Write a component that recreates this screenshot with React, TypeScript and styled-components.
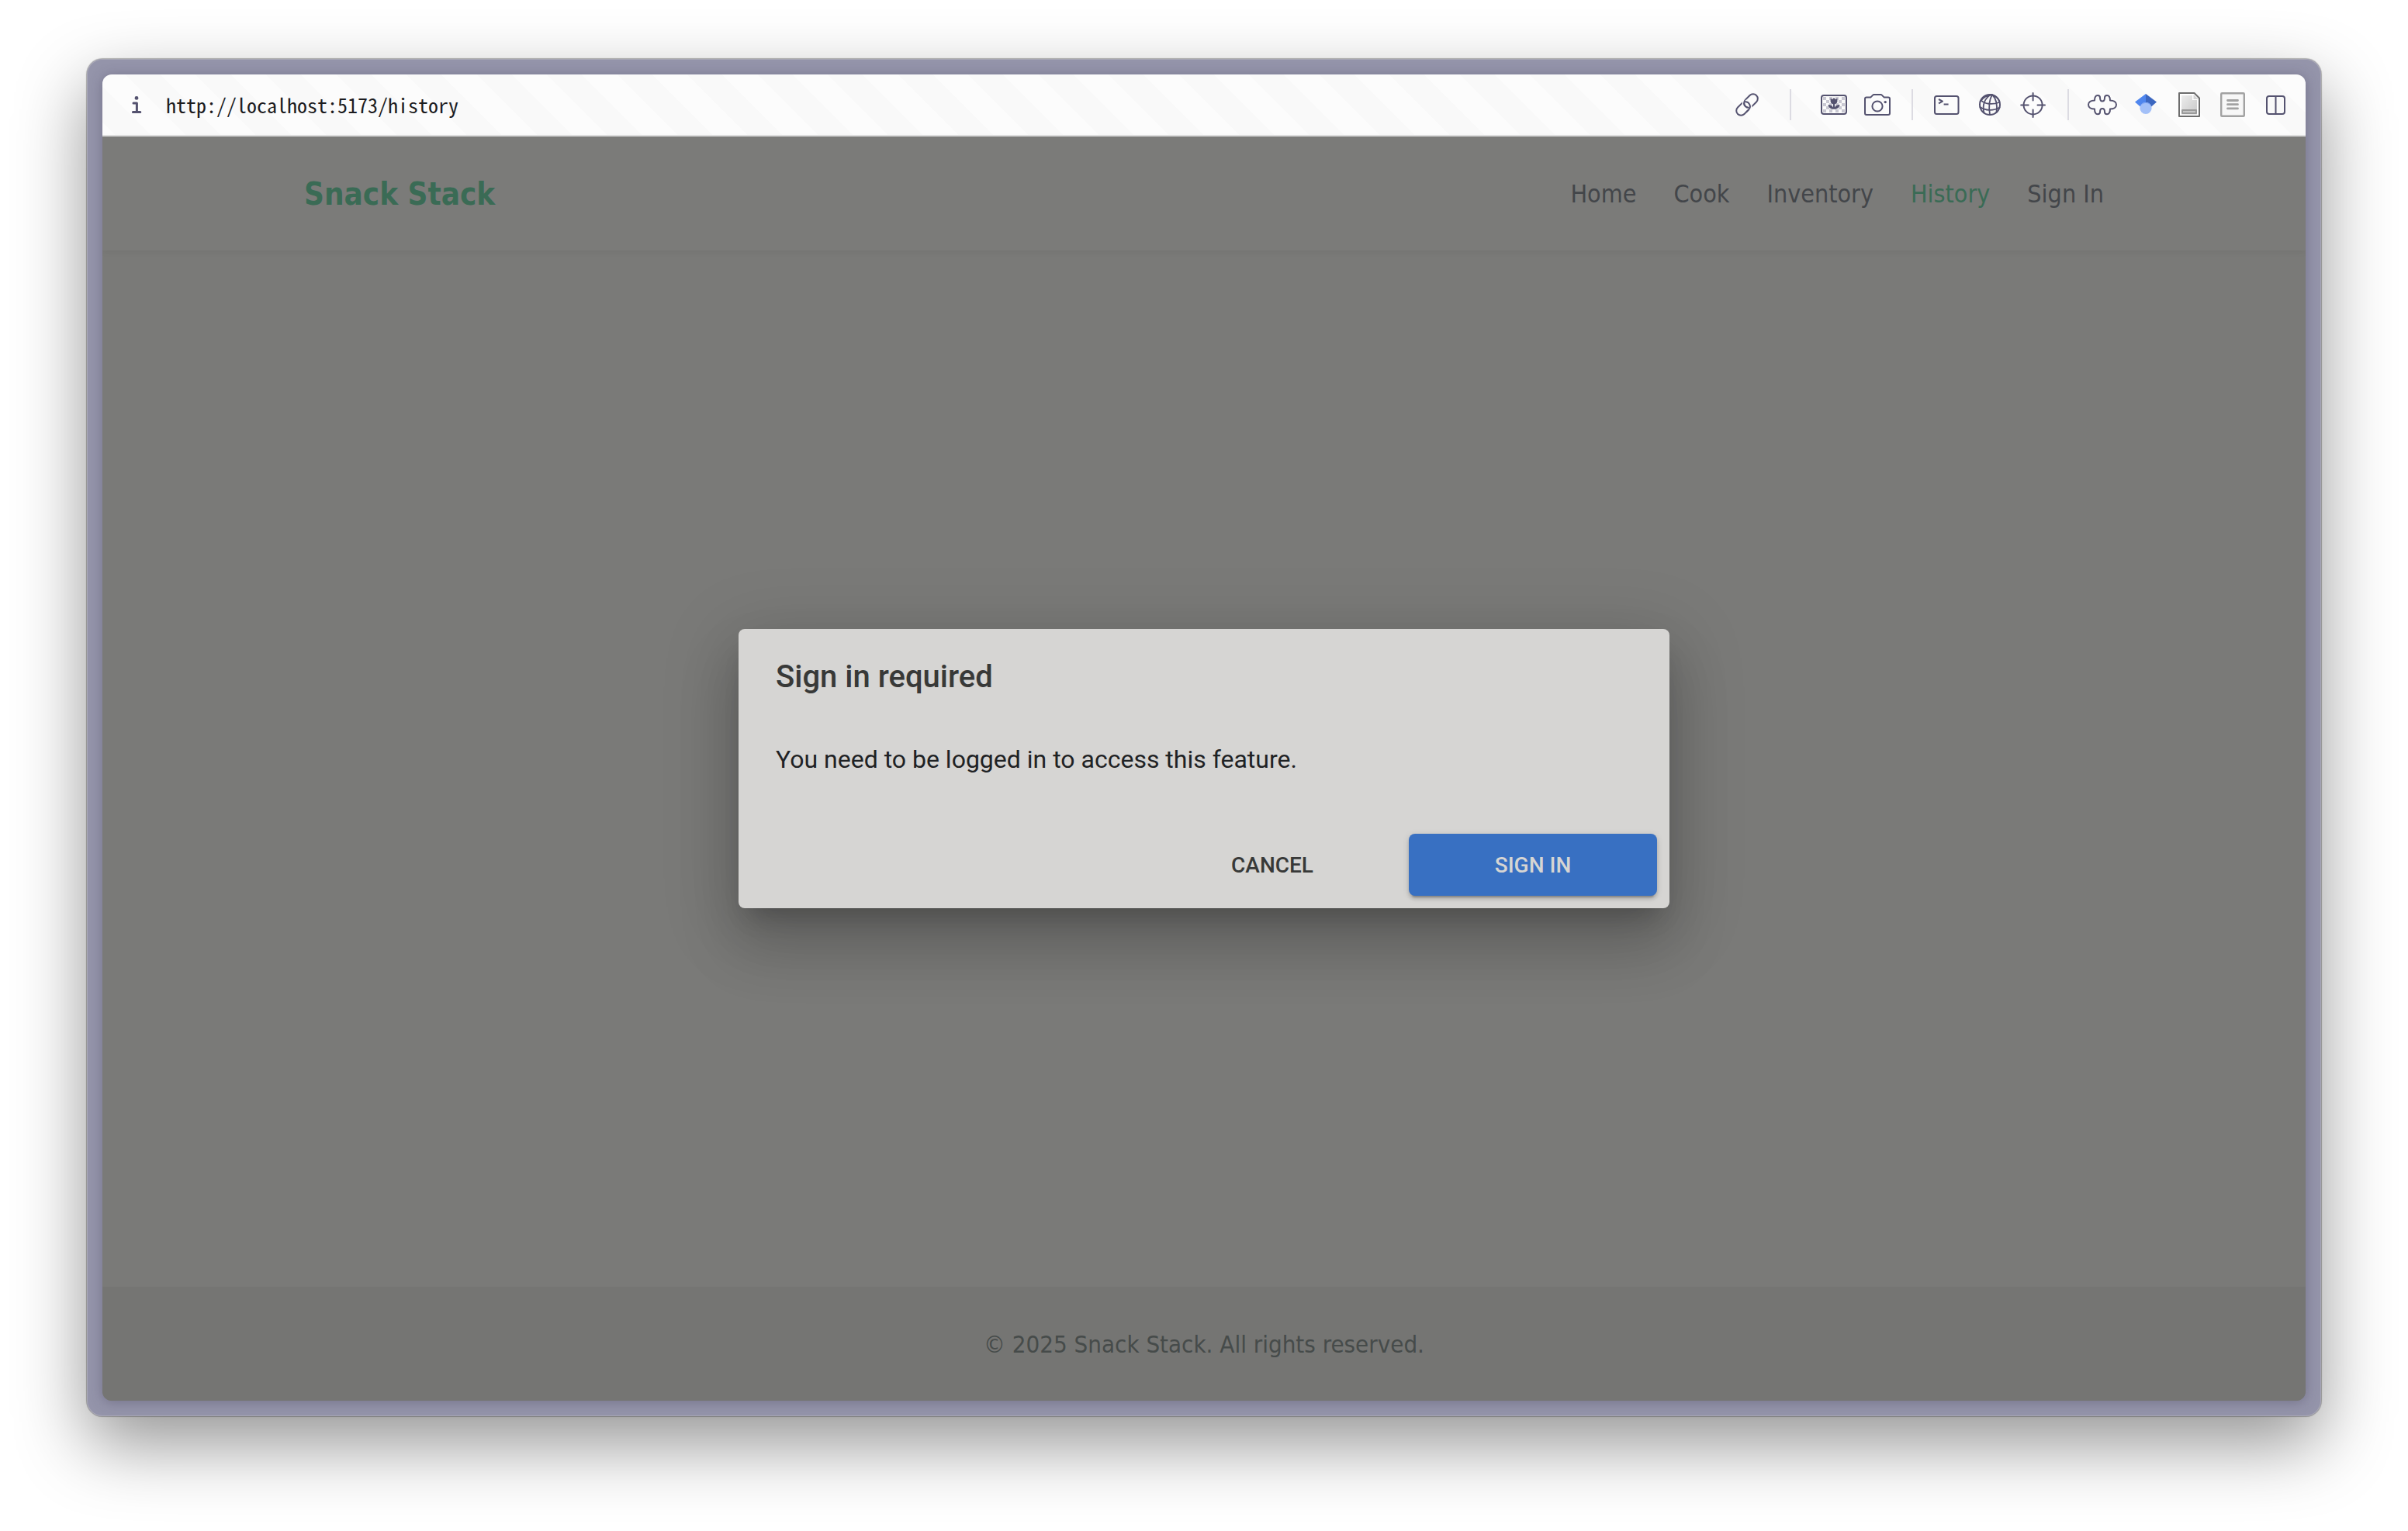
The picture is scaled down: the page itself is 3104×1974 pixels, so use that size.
import React from "react";
import styled, { createGlobalStyle } from "styled-components";

const ink = "#54526f";
const brandFont = `"DejaVu Sans Condensed", "DejaVu Sans", sans-serif`;

const GlobalStyle = createGlobalStyle`
  *, *::before, *::after { box-sizing: border-box; }
  body { margin: 0; background: #ffffff; }
`;

const Desktop = styled.div`
  min-height: 100vh;
  display: flex;
  padding: 76px 112px 148px;
  overflow: hidden;
`;

const WindowFrame = styled.div`
  flex: 1;
  display: flex;
  padding: 20px;
  border-radius: 20px;
  background: #9494aa;
  box-shadow:
    inset 0 0 0 1px #a9a8b6,
    0 0 1px 1px rgba(0, 0, 0, 0.28),
    0 36px 90px rgba(0, 0, 0, 0.42);
`;

const WindowBody = styled.div`
  flex: 1;
  display: flex;
  flex-direction: column;
  border-radius: 12px;
  overflow: hidden;
  box-shadow: 0 2px 16px rgba(60, 55, 80, 0.35);
`;

const AddressBar = styled.div`
  display: flex;
  align-items: center;
  height: 80px;
  padding: 0 10px 0 16px;
  border-bottom: 2px solid #e0e0e0;
  background: repeating-linear-gradient(
    45deg,
    #fcfcfc 0 12px,
    #f9f9f9 12px 44px,
    #fcfcfc 44px 64px
  );
`;

const UrlInput = styled.input`
  flex: 1;
  min-width: 0;
  height: 56px;
  padding: 0 10px 2px;
  border: 0;
  outline: 0;
  background: transparent;
  color: #1c1c1f;
  font: 26px "Noto Sans Mono CJK SC", "Liberation Mono", monospace;
`;

const IconButton = styled.button`
  flex: none;
  width: 56px;
  height: 56px;
  padding: 0;
  border: 0;
  background: transparent;
  color: ${ink};
  cursor: pointer;

  svg {
    display: block;
  }
`;

const Divider = styled.span<{ $wide?: boolean }>`
  flex: none;
  width: 2px;
  height: 40px;
  margin: ${(p) => (p.$wide ? "0 27px" : "0 15px 0 16px")};
  background: #dcdbe2;
`;

const Site = styled.div`
  position: relative;
  flex: 1;
  display: flex;
  flex-direction: column;
  background: #7a7a78;
  font-family: ${brandFont};
`;

const SiteHeader = styled.header`
  background: #7b7b79;
  box-shadow: 0 2px 8px rgba(0, 0, 0, 0.06);
`;

const HeaderInner = styled.div`
  display: flex;
  align-items: center;
  justify-content: space-between;
  width: 100%;
  max-width: 2400px;
  height: 147px;
  margin: 0 auto;
  padding: 0 40px;
`;

const Logo = styled.a`
  color: #3a6b55;
  font-size: 40px;
  font-weight: 700;
  text-decoration: none;
`;

const Nav = styled.nav`
  display: flex;
  gap: 48px;
`;

const NavLink = styled.a<{ $active?: boolean }>`
  color: ${(p) => (p.$active ? "#3a6b55" : "#43464a")};
  font-size: 32px;
  text-decoration: none;
`;

const Main = styled.main`
  flex: 1;
`;

const SiteFooter = styled.footer`
  display: flex;
  align-items: center;
  justify-content: center;
  height: 147px;
  background: #757573;
  color: #464b4a;
  font-size: 31px;
`;

const Backdrop = styled.div`
  position: absolute;
  inset: 0;
  display: flex;
  align-items: center;
  justify-content: center;
`;

const Dialog = styled.section`
  width: 1200px;
  max-width: 90%;
  border-radius: 8px;
  background: #d6d5d3;
  font-family: Roboto, sans-serif;
  box-shadow:
    0 22px 30px -14px rgba(0, 0, 0, 0.2),
    0 48px 76px 6px rgba(0, 0, 0, 0.14),
    0 18px 92px 16px rgba(0, 0, 0, 0.12);
`;

const DialogTitle = styled.h2`
  margin: 0;
  padding: 32px 48px;
  color: #383938;
  font-size: 40px;
  font-weight: 500;
  line-height: 60px;
`;

const DialogText = styled.p`
  margin: 0;
  padding: 20px 48px 56px;
  color: #1f2224;
  font-size: 32px;
  line-height: 48px;
`;

const DialogActions = styled.div`
  display: flex;
  justify-content: flex-end;
  gap: 16px;
  padding: 16px;
`;

const DialogButton = styled.button<{ $primary?: boolean }>`
  width: 320px;
  height: 80px;
  border: 0;
  border-radius: 8px;
  background: ${(p) => (p.$primary ? "#3870c2" : "transparent")};
  color: ${(p) => (p.$primary ? "#d6d5d3" : "#383938")};
  font: 500 28px Roboto, sans-serif;
  text-transform: uppercase;
  cursor: pointer;
  box-shadow: ${(p) =>
    p.$primary
      ? "0 6px 2px -4px rgba(0,0,0,.2), 0 4px 4px rgba(0,0,0,.14), 0 2px 10px rgba(0,0,0,.12)"
      : "none"};
`;

function Icon({ children }: { children: React.ReactNode }) {
  return (
    <svg
      width="56"
      height="56"
      viewBox="0 0 56 56"
      fill="none"
      stroke="currentColor"
      strokeWidth="2"
      strokeLinecap="round"
      strokeLinejoin="round"
      aria-hidden="true"
    >
      {children}
    </svg>
  );
}

const InfoIcon = () => (
  <Icon>
    <circle cx="28" cy="19.4" r="2.4" fill="currentColor" stroke="none" />
    <path d="M24 26h4.4v11.4M23.4 37.6h9.4" strokeWidth="3" />
  </Icon>
);

const LinkIcon = () => (
  <Icon>
    <g transform="rotate(-45 28 28)">
      <rect x="11" y="22" width="20" height="12" rx="6" />
      <rect x="25" y="22" width="20" height="12" rx="6" stroke="#fafafa" strokeWidth="5" />
      <rect x="25" y="22" width="20" height="12" rx="6" />
      <path d="M25 34a6 6 0 0 0 4.200-10.200" stroke="#fafafa" strokeWidth="5" strokeLinecap="butt" />
      <path d="M21 34h4a6 6 0 0 0 4.200-10.200" />
      <path d="M26.600 24a6 6 0 0 0 0 7.800" />
    </g>
  </Icon>
);

const checks = [
  [14, 17], [22, 17], [30, 17], [38, 17],
  [18, 21], [34, 21],
  [14, 25], [38, 25], [22, 25], [30, 25],
  [18, 29], [34, 29],
  [14, 33], [38, 33], [22, 33], [30, 33],
];

const ImageIcon = () => (
  <Icon>
    <g fill="#c9c8d2" stroke="none">
      {checks.map(([x, y]) => (
        <rect key={`${x}-${y}`} x={x} y={y + 1} width="4" height="4" />
      ))}
    </g>
    <rect x="12" y="16" width="32" height="24" rx="3" />
    <path
      d="M23.6 19.4l2.2 1.8L28 19l2.2 2.2 2.2-1.8v4.2c0 2-1.6 3.4-3.4 3.6v4.2c1-2 3.4-3.4 6.6-3.4c-.6 3.4-3.2 5.8-6.6 5.8h-2c-3.400 0-6-2.400-6.600-5.800c3.200 0 5.600 1.400 6.600 3.400v-4.200c-1.800-.2-3.400-1.600-3.400-3.600z"
      fill="currentColor"
      stroke="none"
    />
  </Icon>
);

const CameraIcon = () => (
  <Icon>
    <path d="M14 18.600h5.200l3-3a2 2 0 0 1 1.400-.6h8.800a2 2 0 0 1 1.400.6l3 3H42a2 2 0 0 1 2 2V39a2 2 0 0 1-2 2H14a2 2 0 0 1-2-2V20.600a2 2 0 0 1 2-2z" />
    <circle cx="28" cy="30" r="6.600" />
    <circle cx="38.200" cy="24.600" r="1.700" fill="currentColor" stroke="none" />
  </Icon>
);

const TerminalIcon = () => (
  <Icon>
    <rect x="13" y="17" width="30.500" height="23" rx="2.500" />
    <path d="M18 21l5 2.600l-5 2.800M24.600 27.600h6" strokeLinecap="butt" />
  </Icon>
);

const GlobeIcon = () => (
  <Icon>
    <circle cx="28" cy="28" r="13" />
    <path d="M30 15C21 19 18 29 20.500 38.500M31 15C27 22 26.500 32 28 41M31 15c5 5 7 13 5.500 23M31 15c-7 1-12 4-14.500 8M31 15c4 1.500 7 4 9 8" strokeWidth="1.800" />
    <path d="M17 22.500c4 4.500 14 6 23 2.500M15.500 31c6 4.500 17 5.500 25 .5" strokeWidth="1.800" />
  </Icon>
);

const TargetIcon = () => (
  <Icon>
    <circle cx="27.600" cy="28.400" r="12" />
    <path d="M27.600 13v9.500M27.600 34.500V44M12.200 28.400h9.500M33.500 28.400H43" />
  </Icon>
);

const PuzzleIcon = () => (
  <Icon>
    <path d="M18 22.500c0-4.500 1.500-6.500 4-6.500c2 0 3 1 3 3c0 3 1 4.500 3 4.500s3-1.500 3-4.500c0-2 1-3 3-3c2.500 0 4 2 4 6.500c4.500 0 8 2 8 5.500s-3.500 5.500-8 5.500c0 4.500-1.500 6.800-4 6.800c-2 0-3-1-3-3c0-2.800-1-4.300-3-4.300s-3 1.500-3 4.300c0 2-1 3-3 3c-2.500 0-4-2.300-4-6.800c-4.500 0-8-2-8-5.500s3.500-5.500 8-5.500z" />
  </Icon>
);

const ScholarIcon = () => (
  <Icon>
    <g stroke="none">
      <path d="M28 14L14 24.500L22 31.500L28 26z" fill="#4f86ee" />
      <path d="M28 14L42 24.500L34 31.500L28 26z" fill="#3c67c0" />
      <circle cx="28" cy="32.500" r="7.600" fill="#a3c0f8" />
      <path d="M28 24.900a7.600 7.600 0 0 1 7.300 5.400c-2-3-4.500-4.200-7.300-4.200s-5.300 1.200-7.300 4.200a7.600 7.600 0 0 1 7.300-5.400z" fill="#7fa5f2" />
    </g>
  </Icon>
);

const DocumentIcon = () => (
  <Icon>
    <defs>
      <linearGradient id="paper" x1="0" y1="0" x2="1" y2="1">
        <stop offset="0" stopColor="#ececec" />
        <stop offset="1" stopColor="#c9c9c9" />
      </linearGradient>
    </defs>
    <path d="M15 13h19.500L41 19.500V43H15z" fill="#ffffff" stroke="#6d6d6d" />
    <path d="M18 16h14v6h6v18.500H18z" fill="url(#paper)" stroke="none" />
    <path d="M33.500 15v6H40z" fill="#d5d5d5" stroke="none" />
    <rect x="19" y="35" width="18" height="4" fill="#c6c6c6" stroke="#9a9a9a" />
  </Icon>
);

const ListIcon = () => (
  <Icon>
    <rect x="13.200" y="13.200" width="29.600" height="29.600" rx="1" fill="#f7f7f7" stroke="#a2a2a2" strokeWidth="2.400" />
    <path d="M21.500 22.500h13M21.500 27.700h13M21.500 32.900h13" stroke="#a2a2a2" strokeWidth="2.800" />
  </Icon>
);

const SplitIcon = () => (
  <Icon>
    <rect x="16" y="17" width="23" height="23" rx="3" />
    <path d="M27.500 17v23" />
  </Icon>
);

const navItems = [
  { label: "Home", href: "#home" },
  { label: "Cook", href: "#cook" },
  { label: "Inventory", href: "#inventory" },
  { label: "History", href: "#history", active: true },
  { label: "Sign In", href: "#sign-in" },
];

export default function App() {
  return (
    <>
      <GlobalStyle />
      <Desktop>
        <WindowFrame>
          <WindowBody>
            <AddressBar>
              <IconButton aria-label="Site information"><InfoIcon /></IconButton>
              <UrlInput aria-label="Address" defaultValue="http://localhost:5173/history" spellCheck={false} />
              <IconButton aria-label="Copy link"><LinkIcon /></IconButton>
              <Divider $wide />
              <IconButton aria-label="Images"><ImageIcon /></IconButton>
              <IconButton aria-label="Capture"><CameraIcon /></IconButton>
              <Divider />
              <IconButton aria-label="Console"><TerminalIcon /></IconButton>
              <IconButton aria-label="Network"><GlobeIcon /></IconButton>
              <IconButton aria-label="Inspect"><TargetIcon /></IconButton>
              <Divider />
              <IconButton aria-label="Extensions"><PuzzleIcon /></IconButton>
              <IconButton aria-label="Scholar"><ScholarIcon /></IconButton>
              <IconButton aria-label="Document"><DocumentIcon /></IconButton>
              <IconButton aria-label="Reader"><ListIcon /></IconButton>
              <IconButton aria-label="Split view"><SplitIcon /></IconButton>
            </AddressBar>
            <Site>
              <SiteHeader>
                <HeaderInner>
                  <Logo href="#home">Snack Stack</Logo>
                  <Nav>
                    {navItems.map((item) => (
                      <NavLink key={item.label} href={item.href} $active={item.active}>
                        {item.label}
                      </NavLink>
                    ))}
                  </Nav>
                </HeaderInner>
              </SiteHeader>
              <Main />
              <SiteFooter>© 2025 Snack Stack. All rights reserved.</SiteFooter>
              <Backdrop>
                <Dialog role="dialog" aria-modal="true" aria-labelledby="dialog-title">
                  <DialogTitle id="dialog-title">Sign in required</DialogTitle>
                  <DialogText>You need to be logged in to access this feature.</DialogText>
                  <DialogActions>
                    <DialogButton>Cancel</DialogButton>
                    <DialogButton $primary>Sign In</DialogButton>
                  </DialogActions>
                </Dialog>
              </Backdrop>
            </Site>
          </WindowBody>
        </WindowFrame>
      </Desktop>
    </>
  );
}
